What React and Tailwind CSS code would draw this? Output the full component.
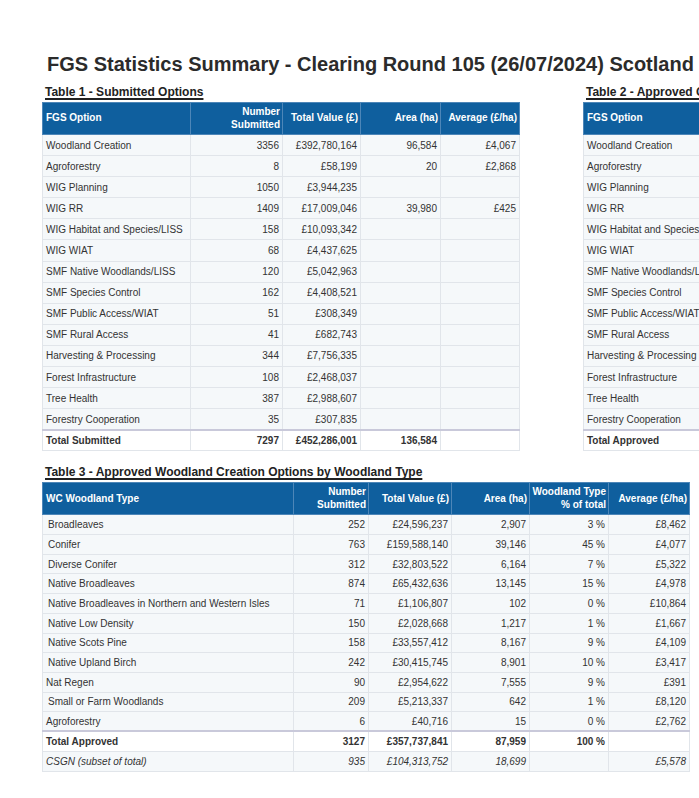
const t1 = [
  ["Woodland Creation", "3356", "£392,780,164", "96,584", "£4,067"],
  ["Agroforestry", "8", "£58,199", "20", "£2,868"],
  ["WIG Planning", "1050", "£3,944,235", "", ""],
  ["WIG RR", "1409", "£17,009,046", "39,980", "£425"],
  ["WIG Habitat and Species/LISS", "158", "£10,093,342", "", ""],
  ["WIG WIAT", "68", "£4,437,625", "", ""],
  ["SMF Native Woodlands/LISS", "120", "£5,042,963", "", ""],
  ["SMF Species Control", "162", "£4,408,521", "", ""],
  ["SMF Public Access/WIAT", "51", "£308,349", "", ""],
  ["SMF Rural Access", "41", "£682,743", "", ""],
  ["Harvesting & Processing", "344", "£7,756,335", "", ""],
  ["Forest Infrastructure", "108", "£2,468,037", "", ""],
  ["Tree Health", "387", "£2,988,607", "", ""],
  ["Forestry Cooperation", "35", "£307,835", "", ""],
]

const t3 = [
  ["Broadleaves", "252", "£24,596,237", "2,907", "3 %", "£8,462", true],
  ["Conifer", "763", "£159,588,140", "39,146", "45 %", "£4,077", true],
  ["Diverse Conifer", "312", "£32,803,522", "6,164", "7 %", "£5,322", true],
  ["Native Broadleaves", "874", "£65,432,636", "13,145", "15 %", "£4,978", true],
  ["Native Broadleaves in Northern and Western Isles", "71", "£1,106,807", "102", "0 %", "£10,864", true],
  ["Native Low Density", "150", "£2,028,668", "1,217", "1 %", "£1,667", true],
  ["Native Scots Pine", "158", "£33,557,412", "8,167", "9 %", "£4,109", true],
  ["Native Upland Birch", "242", "£30,415,745", "8,901", "10 %", "£3,417", true],
  ["Nat Regen", "90", "£2,954,622", "7,555", "9 %", "£391", false],
  ["Small or Farm Woodlands", "209", "£5,213,337", "642", "1 %", "£8,120", true],
  ["Agroforestry", "6", "£40,716", "15", "0 %", "£2,762", false],
]

const th = "bg-[#0f5f9e] text-white font-bold text-[10px] leading-[12.5px] px-[2px] border border-[#4d86b8] align-middle whitespace-nowrap overflow-hidden"
const td = "text-[10px] px-[3px] border border-[#e1e5ea] align-middle whitespace-nowrap overflow-hidden"
const tot = " border-t-2 border-t-[#c9c9da]"

function Caption({ children }) {
  return (
    <div className="pl-[3px] h-[14px] mb-[3px] text-[12px] leading-[14px] font-bold text-[#222] underline decoration-2 underline-offset-[2px] whitespace-nowrap">
      {children}
    </div>
  )
}

function Table1() {
  return (
    <div className="flex-none">
      <Caption>Table 1 - Submitted Options</Caption>
      <table className="table-fixed border-collapse w-[477px]">
        <colgroup>
          <col className="w-[148px]" />
          <col className="w-[92px]" />
          <col className="w-[78px]" />
          <col className="w-[80px]" />
          <col className="w-[79px]" />
        </colgroup>
        <thead>
          <tr className="h-[32px]">
            <th className={th + " text-left pl-[3px]"}>FGS Option</th>
            <th className={th + " text-right"}>Number<br />Submitted</th>
            <th className={th + " text-right"}>Total Value (£)</th>
            <th className={th + " text-right"}>Area (ha)</th>
            <th className={th + " text-right"}>Average (£/ha)</th>
          </tr>
        </thead>
        <tbody>
          {t1.map((r) => (
            <tr key={r[0]} className="h-[21.1px] bg-[#f5f8fa]">
              <td className={td + " text-left"}>{r[0]}</td>
              <td className={td + " text-right"}>{r[1]}</td>
              <td className={td + " text-right"}>{r[2]}</td>
              <td className={td + " text-right"}>{r[3]}</td>
              <td className={td + " text-right"}>{r[4]}</td>
            </tr>
          ))}
          <tr className="h-[21.1px] bg-white font-bold">
            <td className={td + tot + " text-left"}>Total Submitted</td>
            <td className={td + tot + " text-right"}>7297</td>
            <td className={td + tot + " text-right"}>£452,286,001</td>
            <td className={td + tot + " text-right"}>136,584</td>
            <td className={td + tot + " text-right"}></td>
          </tr>
        </tbody>
      </table>
    </div>
  )
}

function Table2() {
  const labels = t1.map((r) => r[0])
  return (
    <div className="flex-none ml-[63px]">
      <Caption>Table 2 - Approved Options</Caption>
      <table className="table-fixed border-collapse w-[436px]">
        <colgroup>
          <col className="w-[116px]" />
          <col className="w-[80px]" />
          <col className="w-[80px]" />
          <col className="w-[80px]" />
          <col className="w-[80px]" />
        </colgroup>
        <thead>
          <tr className="h-[32px]">
            <th className={th + " text-left pl-[3px]"}>FGS Option</th>
            <th className={th + " text-right"}></th>
            <th className={th + " text-right"}></th>
            <th className={th + " text-right"}></th>
            <th className={th + " text-right"}></th>
          </tr>
        </thead>
        <tbody>
          {labels.map((l) => (
            <tr key={l} className="h-[21.1px] bg-[#f5f8fa]">
              <td className={td + " text-left"}>{l}</td>
              <td className={td}></td>
              <td className={td}></td>
              <td className={td}></td>
              <td className={td}></td>
            </tr>
          ))}
          <tr className="h-[21.1px] bg-white font-bold">
            <td className={td + tot + " text-left"}>Total Approved</td>
            <td className={td + tot}></td>
            <td className={td + tot}></td>
            <td className={td + tot}></td>
            <td className={td + tot}></td>
          </tr>
        </tbody>
      </table>
    </div>
  )
}

function Table3() {
  return (
    <div className="mt-[14px]">
      <Caption>Table 3 - Approved Woodland Creation Options by Woodland Type</Caption>
      <table className="table-fixed border-collapse w-[647px]">
        <colgroup>
          <col className="w-[251px]" />
          <col className="w-[75px]" />
          <col className="w-[83px]" />
          <col className="w-[78px]" />
          <col className="w-[79px]" />
          <col className="w-[81px]" />
        </colgroup>
        <thead>
          <tr className="h-[32px]">
            <th className={th + " text-left pl-[3px]"}>WC Woodland Type</th>
            <th className={th + " text-right"}>Number<br />Submitted</th>
            <th className={th + " text-right"}>Total Value (£)</th>
            <th className={th + " text-right"}>Area (ha)</th>
            <th className={th + " text-right"}>Woodland Type<br />% of total</th>
            <th className={th + " text-right"}>Average (£/ha)</th>
          </tr>
        </thead>
        <tbody>
          {t3.map((r) => (
            <tr key={r[0]} className="h-[19.7px] bg-[#f5f8fa]">
              <td className={td + " text-left " + (r[6] ? "pl-[5px]" : "")}>{r[0]}</td>
              <td className={td + " text-right"}>{r[1]}</td>
              <td className={td + " text-right"}>{r[2]}</td>
              <td className={td + " text-right"}>{r[3]}</td>
              <td className={td + " text-right"}>{r[4]}</td>
              <td className={td + " text-right"}>{r[5]}</td>
            </tr>
          ))}
          <tr className="h-[19.7px] bg-white font-bold">
            <td className={td + tot + " text-left"}>Total Approved</td>
            <td className={td + tot + " text-right"}>3127</td>
            <td className={td + tot + " text-right"}>£357,737,841</td>
            <td className={td + tot + " text-right"}>87,959</td>
            <td className={td + tot + " text-right"}>100 %</td>
            <td className={td + tot + " text-right"}></td>
          </tr>
          <tr className="h-[20.7px] bg-[#f5f8fa] italic">
            <td className={td + " text-left"}>CSGN (subset of total)</td>
            <td className={td + " text-right"}>935</td>
            <td className={td + " text-right"}>£104,313,752</td>
            <td className={td + " text-right"}>18,699</td>
            <td className={td + " text-right"}></td>
            <td className={td + " text-right"}>£5,578</td>
          </tr>
        </tbody>
      </table>
    </div>
  )
}

export default function App() {
  return (
    <div className="w-[699px] h-[798px] overflow-hidden bg-white text-[#333] font-['Liberation_Sans',Arial,sans-serif]">
      <div className="pl-[42px] pt-[53px]">
        <h1 className="pl-[5px] h-[23px] mb-[9px] text-[20px] leading-[23px] font-bold text-[#2b2b2b] whitespace-nowrap">
          FGS Statistics Summary - Clearing Round 105 (26/07/2024) Scotland
        </h1>
        <div className="flex w-[1200px]">
          <Table1 />
          <Table2 />
        </div>
        <Table3 />
      </div>
    </div>
  )
}
